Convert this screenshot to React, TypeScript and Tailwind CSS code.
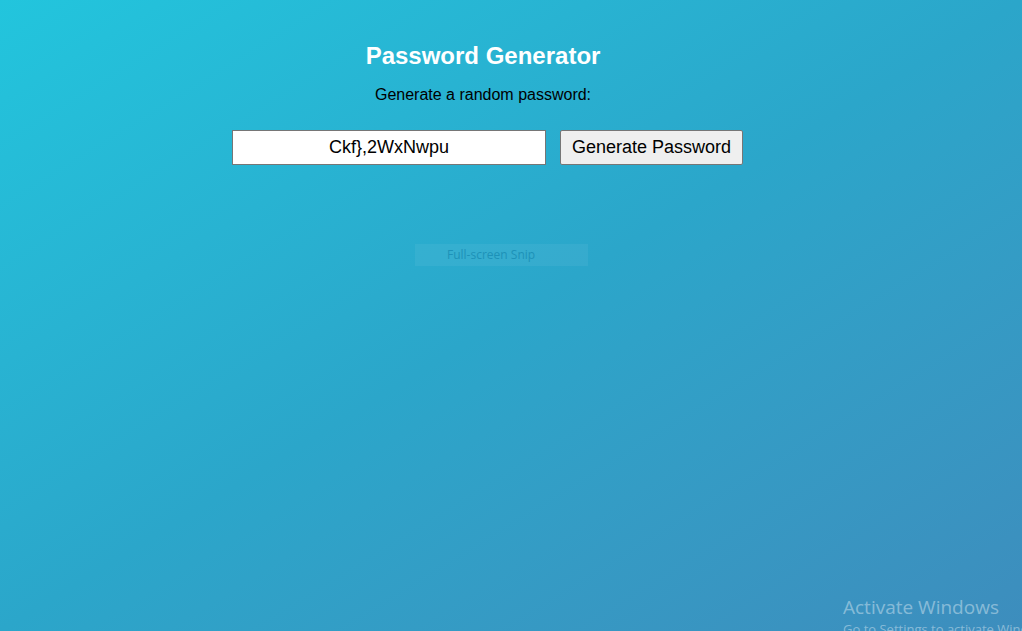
import { useState } from 'react';

const CHARS = 'ABCDEFGHIJKLMNOPQRSTUVWXYZabcdefghijklmnopqrstuvwxyz0123456789!@#$%^&*()_+{}[],.';

function makePassword() {
  let out = '';
  for (let i = 0; i < 12; i++) out += CHARS[Math.floor(Math.random() * CHARS.length)];
  return out;
}

export default function App() {
  const [password, setPassword] = useState('Ckf},2WxNwpu');

  return (
    <div
      className="relative h-[631px] w-full overflow-hidden bg-gradient-to-br from-[#22c5dd] via-[#2ba6ca] to-[#3d8dbd]"
      style={{ fontFamily: '"Liberation Sans", Arial, sans-serif' }}
    >
      <div className="flex flex-col items-center pr-[56px] pt-[41px]">
        <h1 className="text-[24px] font-bold leading-[30px] text-white">Password Generator</h1>
        <p className="mt-[14px] text-[16px] leading-[20px] text-black">Generate a random password:</p>
        <div className="mt-[25px] ml-[9px] flex items-center gap-[14px]">
          <input
            readOnly
            value={password}
            className="h-[35px] w-[314px] border border-[#767676] bg-white text-center text-[18px] text-black outline-none"
          />
          <button
            onClick={() => setPassword(makePassword())}
            className="h-[35px] w-[183px] rounded-[2px] border border-[#767676] bg-[#efefef] text-[18px] text-black"
          >
            Generate Password
          </button>
        </div>
      </div>

      <div className="absolute left-[415px] top-[244px] flex h-[22px] w-[173px] items-center bg-white/5 pl-[32px]">
        <span className="text-[12px] text-[#1d92b8]" style={{ fontFamily: '"Open Sans", sans-serif' }}>
          Full-screen Snip
        </span>
      </div>

      <div className="absolute left-[843px] top-[594px] text-white/40" style={{ fontFamily: '"Open Sans", sans-serif' }}>
        <div className="text-[19px] leading-[26px]">Activate Windows</div>
        <div className="whitespace-nowrap text-[13px] leading-[18px]">Go to Settings to activate Windows.</div>
      </div>
    </div>
  );
}
